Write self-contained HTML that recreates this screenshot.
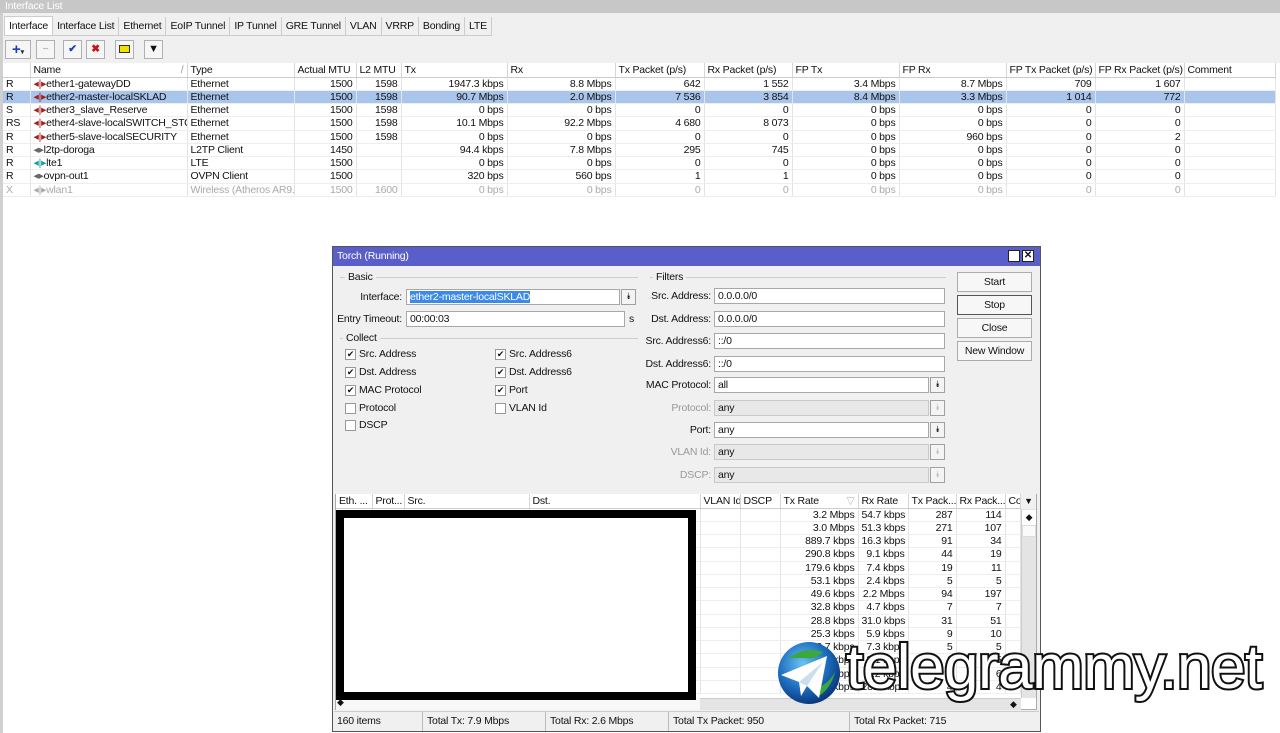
<!DOCTYPE html>
<html><head><meta charset="utf-8"><style>
*{box-sizing:border-box;margin:0;padding:0}
body{width:1280px;height:733px;overflow:hidden;background:#fff;font-family:"Liberation Sans",sans-serif;font-size:10.5px;color:#111;position:relative;letter-spacing:-0.2px}
.a{position:absolute}
table{border-collapse:collapse;table-layout:fixed;position:absolute}
tr{height:13.25px}
td{height:13.25px;padding:0 3px;white-space:nowrap;overflow:hidden;line-height:12px;border-right:1px solid #e4e4e4;border-bottom:1px solid #eee}
td.r{text-align:right}
tr.h{height:14px}
tr.h td{background:#fff;border-right:1px solid #d6d6d6;border-bottom:1px solid #ccc;height:14px}
tr.sel td{background:#a9c5ec}
tr.dis td{color:#aaa}
.inp{position:absolute;background:#fff;border:1px solid #a8a8a8;height:16px;padding:1px 3px;line-height:13px}
.inp.d{background:#e8e8e8;border-color:#c8c8c8}
.btn{position:absolute;background:#f4f4f4;border:1px solid #a0a0a0;height:16px;width:15px;text-align:center;line-height:12px;font-size:9px}
.lbl{position:absolute;text-align:right;width:120px;line-height:16px}
.cb{position:absolute;width:11px;height:11px;border:1px solid #999;background:#fff;font-size:9px;line-height:9px;text-align:center}
.cbl{position:absolute;line-height:12px}
.pb{position:absolute;left:957px;width:75px;height:20px;border:1px solid #acacac;background:#f7f7f7;text-align:center;line-height:18px}
.tab{display:inline-block;padding:0 4px;line-height:18px;border-right:1px solid #ccc}
.tb{position:absolute;top:40px;width:19px;height:19px;border:1px solid #b0b0b0;background:#f6f6f6;text-align:center;line-height:17px;font-weight:bold}
</style></head><body>
<div class="a" style="left:0;top:0;width:1280px;height:13px;background:#c7c7c7;color:#fff;padding-left:5px;line-height:13px">Interface List</div>
<div class="a" style="left:0;top:13px;width:1280px;height:50px;background:#f0f0f0"></div>
<div class="a" style="left:0;top:13px;width:3px;height:720px;background:#d0d0d0"></div>
<div class="a" style="left:4px;top:16px;height:20px;border-bottom:1px solid #ccc;background:#f0f0f0">
<span class="tab" style="background:#fff;border:1px solid #ccc;border-bottom:none">Interface</span><span class="tab">Interface List</span><span class="tab">Ethernet</span><span class="tab">EoIP Tunnel</span><span class="tab">IP Tunnel</span><span class="tab">GRE Tunnel</span><span class="tab">VLAN</span><span class="tab">VRRP</span><span class="tab">Bonding</span><span class="tab">LTE</span></div>
<div class="tb" style="left:5px;width:26px;color:#1a3fb8;font-size:15px">+<span style="font-size:7px;color:#333">▾</span></div>
<div class="tb" style="left:36px;color:#bbb">−</div>
<div class="tb" style="left:63px;color:#1a3fb8">✔</div>
<div class="tb" style="left:86px;color:#d01010">✖</div>
<div class="tb" style="left:115px"><span style="display:inline-block;width:11px;height:8px;background:#f2e000;border:1px solid #333;margin-top:4px"></span></div>
<div class="tb" style="left:144px;font-size:11px">▼</div>
<table style="left:3px;top:63px;width:1272px">
<colgroup><col style="width:27px"><col style="width:157px"><col style="width:107px"><col style="width:62px"><col style="width:45px"><col style="width:106px"><col style="width:108px"><col style="width:89px"><col style="width:88px"><col style="width:107px"><col style="width:107px"><col style="width:89px"><col style="width:89px"><col style="width:91px"></colgroup>
<tr class="h"><td></td><td>Name<span style="float:right;color:#999">/</span></td><td>Type</td><td>Actual MTU</td><td>L2 MTU</td><td>Tx</td><td>Rx</td><td>Tx Packet (p/s)</td><td>Rx Packet (p/s)</td><td>FP Tx</td><td>FP Rx</td><td>FP Tx Packet (p/s)</td><td>FP Rx Packet (p/s)</td><td>Comment</td></tr>
<tr><td>R</td><td><span style="color:#a02020">◂|▸</span>ether1-gatewayDD</td><td>Ethernet</td><td class="r">1500</td><td class="r">1598</td><td class="r">1947.3 kbps</td><td class="r">8.8 Mbps</td><td class="r">642</td><td class="r">1 552</td><td class="r">3.4 Mbps</td><td class="r">8.7 Mbps</td><td class="r">709</td><td class="r">1 607</td><td></td></tr>
<tr class="sel"><td>R</td><td><span style="color:#a02020">◂|▸</span>ether2-master-localSKLAD</td><td>Ethernet</td><td class="r">1500</td><td class="r">1598</td><td class="r">90.7 Mbps</td><td class="r">2.0 Mbps</td><td class="r">7 536</td><td class="r">3 854</td><td class="r">8.4 Mbps</td><td class="r">3.3 Mbps</td><td class="r">1 014</td><td class="r">772</td><td></td></tr>
<tr><td>S</td><td><span style="color:#a02020">◂|▸</span>ether3_slave_Reserve</td><td>Ethernet</td><td class="r">1500</td><td class="r">1598</td><td class="r">0 bps</td><td class="r">0 bps</td><td class="r">0</td><td class="r">0</td><td class="r">0 bps</td><td class="r">0 bps</td><td class="r">0</td><td class="r">0</td><td></td></tr>
<tr><td>RS</td><td><span style="color:#a02020">◂|▸</span>ether4-slave-localSWITCH_STO</td><td>Ethernet</td><td class="r">1500</td><td class="r">1598</td><td class="r">10.1 Mbps</td><td class="r">92.2 Mbps</td><td class="r">4 680</td><td class="r">8 073</td><td class="r">0 bps</td><td class="r">0 bps</td><td class="r">0</td><td class="r">0</td><td></td></tr>
<tr><td>R</td><td><span style="color:#a02020">◂|▸</span>ether5-slave-localSECURITY</td><td>Ethernet</td><td class="r">1500</td><td class="r">1598</td><td class="r">0 bps</td><td class="r">0 bps</td><td class="r">0</td><td class="r">0</td><td class="r">0 bps</td><td class="r">960 bps</td><td class="r">0</td><td class="r">2</td><td></td></tr>
<tr><td>R</td><td><span style="color:#666">◂▸</span>l2tp-doroga</td><td>L2TP Client</td><td class="r">1450</td><td class="r"></td><td class="r">94.4 kbps</td><td class="r">7.8 Mbps</td><td class="r">295</td><td class="r">745</td><td class="r">0 bps</td><td class="r">0 bps</td><td class="r">0</td><td class="r">0</td><td></td></tr>
<tr><td>R</td><td><span style="color:#1aa0a0">◂|▸</span>lte1</td><td>LTE</td><td class="r">1500</td><td class="r"></td><td class="r">0 bps</td><td class="r">0 bps</td><td class="r">0</td><td class="r">0</td><td class="r">0 bps</td><td class="r">0 bps</td><td class="r">0</td><td class="r">0</td><td></td></tr>
<tr><td>R</td><td><span style="color:#666">◂▸</span>ovpn-out1</td><td>OVPN Client</td><td class="r">1500</td><td class="r"></td><td class="r">320 bps</td><td class="r">560 bps</td><td class="r">1</td><td class="r">1</td><td class="r">0 bps</td><td class="r">0 bps</td><td class="r">0</td><td class="r">0</td><td></td></tr>
<tr class="dis"><td>X</td><td>◂|▸wlan1</td><td>Wireless (Atheros AR9...</td><td class="r">1500</td><td class="r">1600</td><td class="r">0 bps</td><td class="r">0 bps</td><td class="r">0</td><td class="r">0</td><td class="r">0 bps</td><td class="r">0 bps</td><td class="r">0</td><td class="r">0</td><td></td></tr>
</table>

<!-- Torch dialog -->
<div class="a" style="left:332px;top:246px;width:709px;height:486px;background:#f0f0f0;border:1px solid #555"></div>
<div class="a" style="left:333px;top:247px;width:707px;height:19px;background:#5a5ec8;color:#fff;line-height:19px;padding-left:4px">Torch (Running)</div>
<div class="a" style="left:1008px;top:250px;width:12px;height:12px;background:#fff;border:1px solid #222"></div>
<div class="a" style="left:1022px;top:250px;width:12px;height:12px;background:#fff;border:1px solid #222;font-size:10px;line-height:10px;text-align:center;font-weight:bold">✕</div>
<div class="a" style="left:340px;top:277px;width:298px;border-top:1px solid #ccc"></div>
<div class="a" style="left:345px;top:271px;background:#f0f0f0;padding:0 3px">Basic</div>
<div class="lbl" style="left:282px;top:289px">Interface:</div>
<div class="inp" style="left:406px;top:289px;width:214px"><span style="background:#3b8ae6;color:#fff">ether2-master-localSKLAD</span></div>
<div class="btn" style="left:621px;top:289px">⯯</div>
<div class="lbl" style="left:282px;top:311px">Entry Timeout:</div>
<div class="inp" style="left:406px;top:311px;width:219px">00:00:03</div>
<div class="a" style="left:629px;top:313px">s</div>
<div class="a" style="left:340px;top:338px;width:298px;border-top:1px solid #ccc"></div>
<div class="a" style="left:343px;top:332px;background:#f0f0f0;padding:0 3px">Collect</div>
<div class="cb" style="left:345px;top:349px">✔</div><div class="cbl" style="left:359px;top:348px">Src. Address</div>
<div class="cb" style="left:345px;top:367px">✔</div><div class="cbl" style="left:359px;top:366px">Dst. Address</div>
<div class="cb" style="left:345px;top:385px">✔</div><div class="cbl" style="left:359px;top:384px">MAC Protocol</div>
<div class="cb" style="left:345px;top:403px"></div><div class="cbl" style="left:359px;top:402px">Protocol</div>
<div class="cb" style="left:345px;top:420px"></div><div class="cbl" style="left:359px;top:419px">DSCP</div>
<div class="cb" style="left:495px;top:349px">✔</div><div class="cbl" style="left:509px;top:348px">Src. Address6</div>
<div class="cb" style="left:495px;top:367px">✔</div><div class="cbl" style="left:509px;top:366px">Dst. Address6</div>
<div class="cb" style="left:495px;top:385px">✔</div><div class="cbl" style="left:509px;top:384px">Port</div>
<div class="cb" style="left:495px;top:403px"></div><div class="cbl" style="left:509px;top:402px">VLAN Id</div>
<div class="a" style="left:650px;top:277px;width:296px;border-top:1px solid #ccc"></div>
<div class="a" style="left:653px;top:271px;background:#f0f0f0;padding:0 3px">Filters</div>
<div class="lbl" style="left:591px;top:288px">Src. Address:</div><div class="inp" style="left:714px;top:288px;width:231px">0.0.0.0/0</div>
<div class="lbl" style="left:591px;top:311px">Dst. Address:</div><div class="inp" style="left:714px;top:311px;width:231px">0.0.0.0/0</div>
<div class="lbl" style="left:591px;top:333px">Src. Address6:</div><div class="inp" style="left:714px;top:333px;width:231px">::/0</div>
<div class="lbl" style="left:591px;top:356px">Dst. Address6:</div><div class="inp" style="left:714px;top:356px;width:231px">::/0</div>
<div class="lbl" style="left:591px;top:377px">MAC Protocol:</div><div class="inp" style="left:714px;top:377px;width:215px">all</div><div class="btn" style="left:930px;top:377px">⯯</div>
<div class="lbl" style="left:591px;top:400px;color:#999">Protocol:</div><div class="inp d" style="left:714px;top:400px;width:215px">any</div><div class="btn" style="left:930px;top:400px;color:#bbb">⯯</div>
<div class="lbl" style="left:591px;top:422px">Port:</div><div class="inp" style="left:714px;top:422px;width:215px">any</div><div class="btn" style="left:930px;top:422px">⯯</div>
<div class="lbl" style="left:591px;top:444px;color:#999">VLAN Id:</div><div class="inp d" style="left:714px;top:444px;width:215px">any</div><div class="btn" style="left:930px;top:444px;color:#bbb">⯯</div>
<div class="lbl" style="left:591px;top:467px;color:#999">DSCP:</div><div class="inp d" style="left:714px;top:467px;width:215px">any</div><div class="btn" style="left:930px;top:467px;color:#bbb">⯯</div>
<div class="pb" style="top:272px">Start</div>
<div class="pb" style="top:295px;border-color:#555">Stop</div>
<div class="pb" style="top:318px">Close</div>
<div class="pb" style="top:341px">New Window</div>

<div class="a" style="left:335px;top:494px;width:702px;height:216px;background:#fff;border:1px solid #aaa"></div>
<table style="left:336px;top:494px;width:684px">
<colgroup><col style="width:36px"><col style="width:32px"><col style="width:125px"><col style="width:171px"><col style="width:40px"><col style="width:40px"><col style="width:78px"><col style="width:50px"><col style="width:48px"><col style="width:49px"><col style="width:15px"></colgroup>
<tr class="h"><td>Eth. ...</td><td>Prot...</td><td>Src.</td><td>Dst.</td><td>VLAN Id</td><td>DSCP</td><td>Tx Rate<span style="float:right;color:#bbb">▽</span></td><td>Rx Rate</td><td>Tx Pack...</td><td>Rx Pack...</td><td>Cor</td></tr>
<tr><td></td><td></td><td></td><td></td><td></td><td></td><td class="r">3.2 Mbps</td><td class="r">54.7 kbps</td><td class="r">287</td><td class="r">114</td><td></td></tr>
<tr><td></td><td></td><td></td><td></td><td></td><td></td><td class="r">3.0 Mbps</td><td class="r">51.3 kbps</td><td class="r">271</td><td class="r">107</td><td></td></tr>
<tr><td></td><td></td><td></td><td></td><td></td><td></td><td class="r">889.7 kbps</td><td class="r">16.3 kbps</td><td class="r">91</td><td class="r">34</td><td></td></tr>
<tr><td></td><td></td><td></td><td></td><td></td><td></td><td class="r">290.8 kbps</td><td class="r">9.1 kbps</td><td class="r">44</td><td class="r">19</td><td></td></tr>
<tr><td></td><td></td><td></td><td></td><td></td><td></td><td class="r">179.6 kbps</td><td class="r">7.4 kbps</td><td class="r">19</td><td class="r">11</td><td></td></tr>
<tr><td></td><td></td><td></td><td></td><td></td><td></td><td class="r">53.1 kbps</td><td class="r">2.4 kbps</td><td class="r">5</td><td class="r">5</td><td></td></tr>
<tr><td></td><td></td><td></td><td></td><td></td><td></td><td class="r">49.6 kbps</td><td class="r">2.2 Mbps</td><td class="r">94</td><td class="r">197</td><td></td></tr>
<tr><td></td><td></td><td></td><td></td><td></td><td></td><td class="r">32.8 kbps</td><td class="r">4.7 kbps</td><td class="r">7</td><td class="r">7</td><td></td></tr>
<tr><td></td><td></td><td></td><td></td><td></td><td></td><td class="r">28.8 kbps</td><td class="r">31.0 kbps</td><td class="r">31</td><td class="r">51</td><td></td></tr>
<tr><td></td><td></td><td></td><td></td><td></td><td></td><td class="r">25.3 kbps</td><td class="r">5.9 kbps</td><td class="r">9</td><td class="r">10</td><td></td></tr>
<tr><td></td><td></td><td></td><td></td><td></td><td></td><td class="r">22.7 kbps</td><td class="r">7.3 kbps</td><td class="r">5</td><td class="r">5</td><td></td></tr>
<tr><td></td><td></td><td></td><td></td><td></td><td></td><td class="r">20.1 kbps</td><td class="r">3.1 kbps</td><td class="r">6</td><td class="r">5</td><td></td></tr>
<tr><td></td><td></td><td></td><td></td><td></td><td></td><td class="r">18.4 kbps</td><td class="r">8.2 kbps</td><td class="r">5</td><td class="r">6</td><td></td></tr>
<tr><td></td><td></td><td></td><td></td><td></td><td></td><td class="r">16.6 kbps</td><td class="r">28.2 kbps</td><td class="r">4</td><td class="r">4</td><td></td></tr>
</table>
<div class="a" style="left:1021px;top:494px;width:15px;height:204px;background:#e4e4e4;border-left:1px solid #ccc"></div>
<div class="a" style="left:1021px;top:494px;width:15px;height:15px;text-align:center;font-size:9px;line-height:15px;background:#f0f0f0">▼</div>
<div class="a" style="left:1022px;top:510px;width:14px;height:15px;background:#fff;text-align:center;font-size:9px;line-height:15px">◆</div>
<div class="a" style="left:1022px;top:525px;width:14px;height:12px;background:#fafafa;border:1px solid #ddd"></div>
<div class="a" style="left:336px;top:698px;width:685px;height:12px;background:#e4e4e4;border-top:1px solid #ccc"></div>
<div class="a" style="left:336px;top:698px;width:364px;height:12px;background:#f8f8f8"></div>
<div class="a" style="left:337px;top:697px;font-size:9px">◆</div>
<div class="a" style="left:1010px;top:699px;font-size:9px">◆</div>
<div class="a" style="left:336px;top:510px;width:360px;height:190px;border:8px solid #000;background:#fff"></div>
<div class="a" style="left:334px;top:711px;width:705px;height:19px;border-top:1px solid #ccc;line-height:18px">
<span class="a" style="left:3px">160 items</span>
<span class="a" style="left:88px;border-left:1px solid #bbb;padding-left:4px;height:19px">Total Tx: 7.9 Mbps</span>
<span class="a" style="left:211px;border-left:1px solid #bbb;padding-left:4px;height:19px">Total Rx: 2.6 Mbps</span>
<span class="a" style="left:334px;border-left:1px solid #bbb;padding-left:4px;height:19px">Total Tx Packet: 950</span>
<span class="a" style="left:515px;border-left:1px solid #bbb;padding-left:4px;height:19px">Total Rx Packet: 715</span>
</div>

<!-- watermark -->
<svg class="a" style="left:775px;top:638px" width="70" height="70" viewBox="0 0 70 70">
<defs><radialGradient id="g" cx="40%" cy="35%" r="65%"><stop offset="0" stop-color="#6ac4f0"/><stop offset="0.6" stop-color="#1e6fc0"/><stop offset="1" stop-color="#0b3a80"/></radialGradient></defs>
<circle cx="34" cy="35" r="31" fill="url(#g)"/>
<path d="M14 20 Q30 8 48 14 Q40 22 30 20 Z M40 50 Q52 48 60 34 Q56 50 44 58 Z" fill="#3aa83a"/>
<path d="M6 37 L52 18 L44 60 L32 48 L26 58 L24 44 Z" fill="#fff"/>
<path d="M24 44 L48 24 L32 48 Z" fill="#c9dff0"/>
</svg>
<div class="a" style="left:846px;top:628px;font-family:'Liberation Sans',sans-serif;font-size:62px;line-height:80px;color:#fff;-webkit-text-stroke:4px #111;paint-order:stroke fill;letter-spacing:-0.5px">telegrammy.net</div>
</body></html>
